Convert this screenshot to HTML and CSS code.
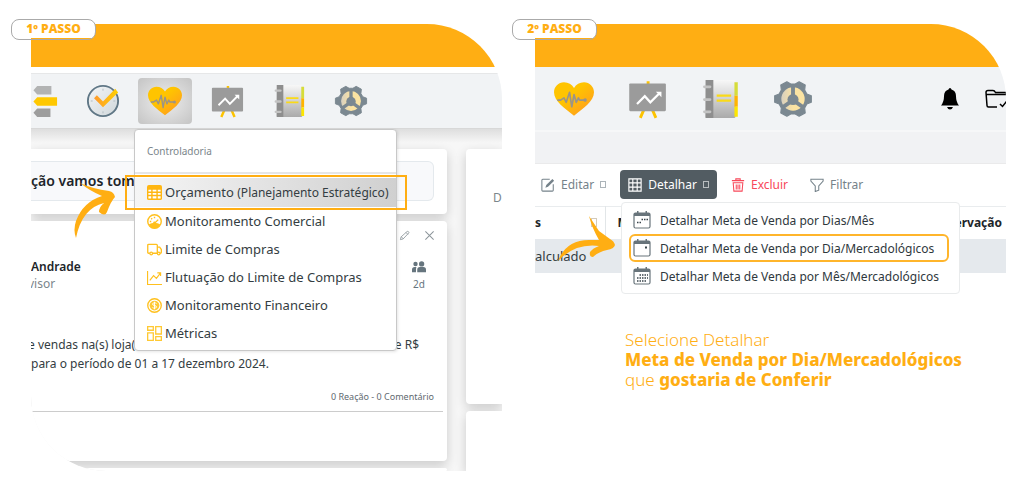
FILE: index.html
```html
<!DOCTYPE html>
<html lang="pt-BR">
<head>
  <meta charset="UTF-8">
  <meta name="viewport" content="width=device-width, initial-scale=1.0">
  <title>Detalhar Meta de Venda</title>
  <link rel="stylesheet" href="styles.css">
</head>
<body>
  <svg class="sprite" width="0" height="0" aria-hidden="true">
    <defs>
      <linearGradient id="g-heart" x1="0" y1="0" x2="1" y2="1"><stop offset=".4" stop-color="#ffc400"/><stop offset="1" stop-color="#ff9425"/></linearGradient>
      <linearGradient id="g-check" x1="0" y1="0" x2="1" y2="0"><stop offset="0" stop-color="#ff9a2e"/><stop offset="1" stop-color="#ffd000"/></linearGradient>
      <linearGradient id="g-book" x1="0" y1="0" x2="0" y2="1"><stop offset="0" stop-color="#f7f7f7"/><stop offset="1" stop-color="#aaa"/></linearGradient>
      <linearGradient id="g-clock" x1="0" y1="0" x2="1" y2="1"><stop offset="0" stop-color="#f4f6f8"/><stop offset="1" stop-color="#cfd6da"/></linearGradient>
      <linearGradient id="g-gear" x1="0" y1="0" x2="1" y2="0"><stop offset="0" stop-color="#d8d0c0"/><stop offset=".5" stop-color="#fbe3a2"/></linearGradient>
    </defs>
    <symbol id="signs" viewBox="0 0 36 36">
      <path d="M14 2h15v9H14l-4-4.500z" fill="#b2b3b3"/><path d="M14 14h21v9H14l-4-4.500z" fill="#ffc800"/><path d="M14 26h14v9H14l-4-4.500z" fill="#9d9d9d"/>
    </symbol>
    <symbol id="clock" viewBox="0 0 36 36">
      <circle cx="18" cy="18" r="16" fill="url(#g-clock)" stroke="#607786" stroke-width="2"/>
      <path d="M18 5v2M18 29v2M5 18h2M29 18h2" stroke="#aeb8be"/>
      <path d="M8.500 15l3-3 6.500 6.500L31 5l3 4-16 15.500z" fill="url(#g-check)"/>
    </symbol>
    <symbol id="heart" viewBox="0 0 36 36">
      <path d="M18 33C10 27 0 20 0 12 0 7 4 3 9 3 13 3 16 5 18 8 20 5 23 3 27 3 32 3 36 7 36 12 36 20 26 27 18 33z" fill="url(#g-heart)"/>
      <path d="M3 19h3l3-2 2 4 3-9 2 13 2-11 2 7 2-4 1 2h5" fill="none" stroke="#9b9488" stroke-width="1.500" stroke-linejoin="round"/><circle cx="28" cy="19" r="1.600" fill="#9b9488"/>
    </symbol>
    <symbol id="easel" viewBox="0 0 36 36">
      <path d="M19 2v4M15 28l-3 7M23 28l3 7" stroke="#fdc300" stroke-width="2.600"/>
      <rect x="2" y="4" width="33" height="25" rx="1" fill="#9b9b9b"/>
      <path d="M9 22.500l7-7 5 5.500 8-8" fill="none" stroke="#fff" stroke-width="2"/><path d="M26 11.500h5v5z" fill="#fff"/>
    </symbol>
    <symbol id="book" viewBox="0 0 36 36">
      <rect x="5" y="1" width="27" height="34" rx="1" fill="url(#g-book)"/><path d="M5 1h7v34H5z" fill="#8e8e8e"/>
      <path d="M31 3h3v12h-3z" fill="#d6dc3a"/><path d="M31 15h3v10h-3z" fill="#ffb400"/><path d="M31 25h3v9h-3z" fill="#fde600"/>
      <path d="M15 15h13M15 19.500h13" stroke="#fada17" stroke-width="2"/>
      <path d="M4 7h5M4 18.500h5M4 29.500h5" stroke="#c3c3c3" stroke-width="2.500" stroke-linecap="round"/>
    </symbol>
    <symbol id="gear" viewBox="0 0 36 36">
      <path d="M12.500 2.500l3.500 2h4l3.500-2 5.500 3-.500 4.500 2 3.500 4 1.500v6l-4 1.500-2 3.500.500 4.500-5.500 3-3.500-2h-4l-3.500 2-5.500-3 .500-4.500-2-3.500-4-1.500v-6l4-1.500 2-3.500L7 5.500z" fill="#7b8891" stroke="#7b8891" stroke-linejoin="round"/>
      <circle cx="18" cy="18" r="10.500" fill="url(#g-gear)"/>
      <path d="M18 7v11M18 19l-10 7M18 19l10 7" stroke="#7b8891" stroke-width="3.500"/><circle cx="18" cy="18.500" r="5" fill="#7b8891"/>
    </symbol>
    <symbol id="table" viewBox="0 0 16 16">
      <rect x="0" y="0" width="16" height="16" rx="2" fill="#ffb612"/>
      <path d="M1.500 5h3v2h-3zM6 5h4v2H6zM11.500 5h3v2h-3zM1.500 8.500h3v2h-3zM6 8.500h4v2H6zM11.500 8.500h3v2h-3zM1.500 12h3v2.500h-3zM6 12h4v2.500H6zM11.500 12h3v2.500h-3z" fill="#fff"/>
    </symbol>
    <symbol id="gauge" viewBox="0 0 16 16">
      <circle cx="8" cy="8" r="7.200" fill="none" stroke="#ffc01e" stroke-width="1.500"/><path d="M2 11c3-2 9-2 12 0-1 3-3 4.500-6 4.500S3 14 2 11z" fill="#ffc01e"/>
      <path d="M8 10l4-4M8 3v1.500M3 8h1.500M4.500 4.500l1 1" stroke="#ffc01e" stroke-width="1.500"/><circle cx="8" cy="9.500" r="1.500" fill="#ffc01e"/>
    </symbol>
    <symbol id="truck" viewBox="0 0 16 16">
      <path d="M3 12H1.800Q.800 12 .800 11V3.500q0-1 1-1H10q1 0 1 1V12H6M11 5.500h2.500L15.300 8v3q0 1-1 1H14" fill="none" stroke="#ffc01e" stroke-width="1.400"/>
      <circle cx="4.500" cy="12.300" r="1.400" fill="none" stroke="#ffc01e" stroke-width="1.300"/><circle cx="12.500" cy="12.300" r="1.400" fill="none" stroke="#ffc01e" stroke-width="1.300"/>
    </symbol>
    <symbol id="graph" viewBox="0 0 16 16"><path d="M.600 1v14.400H16M3 11l4-5 3 3 4.500-6M11 3h3.500v3.500" fill="none" stroke="#ffc01e" stroke-width="1.200"/></symbol>
    <symbol id="coin" viewBox="0 0 16 16">
      <circle cx="8" cy="8" r="7.200" fill="none" stroke="#ffc01e" stroke-width="1.400"/><circle cx="8" cy="8" r="5.200" fill="#ffc933"/>
      <path d="M10 6Q9.500 5 8 5T6 6.300 8 8t2 1.700T8 11 6 10M8 4v8" fill="none" stroke="#fff" stroke-width="1"/>
    </symbol>
    <symbol id="grid" viewBox="0 0 16 16"><path d="M.700.700h6v3.800h-6zM9.300.700h6v7.800h-6zM.700 7.300h6v8h-6zM9.300 11.300h6v4h-6z" fill="none" stroke="#ffc933" stroke-width="1.400"/></symbol>
    <symbol id="pencil" viewBox="0 0 16 16"><path d="M2 14l1-4 9-8q2-.500 2.500 2l-8.500 9zM10 3.500l3 3M3.500 10l3 3" fill="none" stroke="currentColor" stroke-width="1.200"/></symbol>
    <symbol id="close" viewBox="0 0 16 16"><path d="M2 2l12 12M14 2L2 14" stroke="currentColor" stroke-width="1.500"/></symbol>
    <symbol id="people" viewBox="0 0 16 16"><circle cx="4" cy="4.500" r="2.500"/><circle cx="11" cy="4.500" r="3"/><path d="M0 14v-3q0-3 3-3h2q-.500 1-.500 6zM6 14v-3q0-3 3-3h4q3 0 3 3v3z"/></symbol>
    <symbol id="edit" viewBox="0 0 16 16"><path d="M10 1.500H2q-1 0-1 1V14q0 1 1 1h11q1 0 1-1V7" fill="none" stroke="currentColor" stroke-width="1.200"/><path d="M5 11l1-3 7-7 2 2-7 7z"/></symbol>
    <symbol id="cells" viewBox="0 0 16 16"><path d="M1 1h14v14H1zM1 5.500h14M1 10.500h14M5.500 1v14M10.500 1v14" fill="none" stroke="currentColor" stroke-width="1.300"/></symbol>
    <symbol id="trash" viewBox="0 0 16 16"><path d="M1 3h14M5.500 3V1h5v2M2.500 5.500h11l-.800 9.500H3.300zM6 7.500v5.500M8 7.500v5.500M10 7.500v5.500" fill="none" stroke="currentColor" stroke-width="1.200"/></symbol>
    <symbol id="funnel" viewBox="0 0 16 16"><path d="M1 1.500h14v2L10 9v5l-4 1.500V9L1 3.500z" fill="none" stroke="currentColor" stroke-width="1.200"/></symbol>
    <symbol id="bell" viewBox="0 0 20 22"><path d="M10 0q1.200 0 1.500 1.600Q16 3 16 8q0 6 3 9.500H1Q4 14 4 8q0-5 4.500-6.400Q8.800 0 10 0zM7 19h6q-1 2.500-3 2.500T7 19z"/></symbol>
    <symbol id="folder" viewBox="0 0 24 20"><path d="M12 18H3.500Q2 18 2 16.500L1 3.500Q1 1.500 3 1.500h5q1.500 0 2.500 2h9.500q2 0 2 2V10M1 5.500h20M15 15l2.500 2.500 4-5" fill="none" stroke="currentColor" stroke-width="1.500"/></symbol>
    <symbol id="cal" viewBox="0 0 18 18"><rect x="1" y="2" width="16" height="15" rx="1.500" fill="#fff" stroke="#68747b" stroke-width="1.200"/><path d="M1 2h16v3H1zM4 0h1.500v3H4zM12.500 0H14v3h-1.500z" fill="#68747b"/></symbol>
  </svg>

  <main class="steps">
    <section class="step">
      <h2 class="badge">1º PASSO</h2>
      <div class="screen screen-home">
        <div class="brand-bar"></div>
        <nav class="modules">
          <button class="module" aria-label="Cadastros"><svg><use href="#signs"/></svg></button>
          <button class="module" aria-label="Tarefas"><svg><use href="#clock"/></svg></button>
          <button class="module active" aria-label="Controladoria"><svg><use href="#heart"/></svg></button>
          <button class="module" aria-label="Painel"><svg><use href="#easel"/></svg></button>
          <button class="module" aria-label="Agenda"><svg><use href="#book"/></svg></button>
          <button class="module" aria-label="Configurações"><svg><use href="#gear"/></svg></button>
        </nav>

        <div class="feed">
          <div class="feed-main">
            <div class="card notice"><p>ção vamos tom</p></div>
            <article class="card post">
              <div class="post-tools">
                <button aria-label="Editar"><svg><use href="#pencil"/></svg></button>
                <button aria-label="Fechar"><svg><use href="#close"/></svg></button>
              </div>
              <header class="post-head">
                <div><strong>Andrade</strong><span class="role">visor</span></div>
                <div class="age"><svg><use href="#people"/></svg><span>2d</span></div>
              </header>
              <div class="post-text">
                <p class="cut"><span>e vendas na(s) loja(s)</span><span>e R$</span></p>
                <p>para o período de 01 a 17 dezembro 2024.</p>
              </div>
              <footer class="post-foot">0 Reação - 0 Comentário</footer>
            </article>
            <div class="card next"></div>
          </div>
          <div class="feed-side">
            <div class="card side-top">D</div>
            <div class="card side-bottom"></div>
          </div>
        </div>

        <div class="menu">
          <h3>Controladoria</h3>
          <a href="#" class="selected"><svg><use href="#table"/></svg><span>Orçamento <small>(Planejamento Estratégico)</small></span></a>
          <a href="#"><svg><use href="#gauge"/></svg>Monitoramento Comercial</a>
          <a href="#"><svg><use href="#truck"/></svg>Limite de Compras</a>
          <a href="#"><svg><use href="#graph"/></svg>Flutuação do Limite de Compras</a>
          <a href="#"><svg><use href="#coin"/></svg>Monitoramento Financeiro</a>
          <a href="#"><svg><use href="#grid"/></svg>Métricas</a>
        </div>
        <svg class="arrow arrow-one" viewBox="0 0 44 58"><path d="M7 1Q20 7 36 9q5 1 6 6-4 4-8 15-2 5-8 0 0-5 5-9Q9 26 3 56 0 48 3 39 10 20 29 14 17 9 7 1z" fill="#ffae13"/></svg>
      </div>
    </section>

    <section class="step">
      <h2 class="badge">2º PASSO</h2>
      <div class="screen">
        <div class="brand-bar"></div>
        <nav class="modules modules-large">
          <button class="module" aria-label="Controladoria"><svg><use href="#heart"/></svg></button>
          <button class="module" aria-label="Painel"><svg><use href="#easel"/></svg></button>
          <button class="module" aria-label="Agenda"><svg><use href="#book"/></svg></button>
          <button class="module" aria-label="Configurações"><svg><use href="#gear"/></svg></button>
          <div class="status">
            <button aria-label="Notificações"><svg class="bell"><use href="#bell"/></svg></button>
            <button aria-label="Arquivos"><svg class="folder"><use href="#folder"/></svg></button>
          </div>
        </nav>
        <div class="subbar"></div>
        <div class="actions">
          <button class="action"><svg><use href="#edit"/></svg>Editar<i class="box"></i></button>
          <button class="action open"><svg><use href="#cells"/></svg>Detalhar<i class="box"></i></button>
          <button class="action danger"><svg><use href="#trash"/></svg>Excluir</button>
          <button class="action"><svg><use href="#funnel"/></svg>Filtrar</button>
        </div>
        <table class="goals">
          <thead>
            <tr><th class="first"><div>s<i class="box"></i></div></th><th>M</th><th class="last">Observação</th></tr>
          </thead>
          <tbody>
            <tr><td class="first">alculado</td><td></td><td></td></tr>
          </tbody>
        </table>

        <div class="options">
          <a href="#"><svg viewBox="0 0 18 18"><use href="#cal"/><path d="M4 11.500h1.500M6.500 11.500H8M8.500 8.500H10M11 8.500h1.500M13.500 8.500H15" stroke="#39444b" stroke-width="1.500"/></svg>Detalhar Meta de Venda por Dias/Mês</a>
          <a href="#" class="chosen"><svg viewBox="0 0 18 18"><use href="#cal"/><path d="M12 8.500h2" stroke="#39444b" stroke-width="2"/></svg>Detalhar Meta de Venda por Dia/Mercadológicos</a>
          <a href="#"><svg viewBox="0 0 18 18"><use href="#cal"/><path d="M6.500 8H15M4 11h11M4 14h9" stroke="#39444b" stroke-width="1.500" stroke-dasharray="1.500 1"/></svg>Detalhar Meta de Venda por Mês/Mercadológicos</a>
        </div>
        <svg class="arrow arrow-two" viewBox="0 0 58 50"><path d="M32 5l10 15 11 8q4 2 5 6-1 4-8 5-9 2-14 7-4 0-3-5 3-4 9-6Q18 32 1 50 9 29 32 29l10 0Q35 17 32 5z" fill="#ffae13"/></svg>
        <p class="caption">Selecione Detalhar<br><strong>Meta de Venda por Dia/Mercadológicos</strong><br>que <strong>gostaria de Conferir</strong></p>
      </div>
    </section>
  </main>
</body>
</html>
```
FILE: styles.css
```css
*{
  box-sizing: border-box;
}
body{
  margin: 0;
  background-color: #fff;
  color: #343d42;
  font-family: "Noto Sans", "Open Sans", sans-serif;
  font-size: 12px;
}
h2,h3,p{
  margin: 0;
}
button{
  border: none;
  background: none;
  padding: 0;
  font: inherit;
  color: inherit;
}
a{
  color: inherit;
  text-decoration: none;
}
svg{
  display: block;
  flex: none;
  fill: currentColor;
}
.sprite{
  position: absolute;
}
.steps{
  display: grid;
  grid-template-columns: 1fr 1fr;
  gap: 33px;
  padding: 24px 18px 20px 31px;
}
.step{
  position: relative;
  min-width: 0;
}
/* step label hangs over the corner of the screen */
.badge{
  position: absolute;
  z-index: 3;
  left: -20px;
  top: -5px;
  width: 85px;
  height: 21px;
  border: 1px solid #aaa;
  border-radius: 8px;
  background: linear-gradient(#fff 18px, transparent 18px);
  color: #ffae13;
  font: 800 12px/17px "Open Sans", sans-serif;
  text-align: center;
}
.step:nth-child(2) .badge{
  left: -23px;
}
.screen{
  overflow: hidden;
  border-radius: 0 75px 0 0;
}
.screen-home{
  border-radius: 0 75px 0 75px;
}
.brand-bar{
  height: 43px;
  background-color: #ffae13;
}
.modules{
  display: flex;
  align-items: center;
  gap: 8px;
  height: 56px;
  margin-top: 6px;
  border-top: 1px solid #e6e7e8;
  border-bottom: 1px solid #d8d8d8;
  background-color: #f1f3f5;
}
.module{
  display: flex;
  flex: none;
  align-items: center;
  justify-content: center;
  width: 54px;
  height: 46px;
  border-radius: 4px;
}
.module svg{
  width: 34px;
  height: 34px;
}
.module:first-child{
  margin-left: -17px;
}
.module.active{
  background: radial-gradient(#eee, #c4c4c4);
}
.feed{
  display: flex;
  gap: 19px;
  padding-top: 20px;
  background: linear-gradient(#dedede, #f7f7f7 14px);
}
.feed-main{
  display: flex;
  flex: 1;
  flex-direction: column;
  gap: 7px;
  min-width: 0;
}
.feed-side{
  display: flex;
  flex-direction: column;
  gap: 7px;
  width: 36px;
}
.card{
  border-radius: 0 4px 4px 0;
  background-color: #fff;
  box-shadow: 0 4px 12px rgba(0,0,0,.18);
}
.notice{
  padding: 12px 13px 13px 0;
}
.notice p{
  border: 1px solid #e4e9ed;
  border-left: none;
  border-radius: 0 6px 6px 0;
  background-color: #f8f9fb;
  color: #212529;
  font-size: 14px;
  font-weight: 600;
  line-height: 38px;
}
.post{
  height: 240px;
  padding: 9px 4px 0 0;
}
.post-tools{
  display: flex;
  justify-content: flex-end;
  gap: 14px;
  padding-right: 8px;
  color: #8c959a;
}
.post-tools svg{
  width: 11px;
  height: 11px;
}
.post-head{
  display: flex;
  justify-content: space-between;
  height: 51px;
  padding: 17px 17px 0 0;
  line-height: 17px;
}
.post-head strong{
  display: block;
  color: #212529;
  font-weight: 600;
}
.role{
  margin-left: -3px;
  color: #7b868c;
}
.age{
  display: flex;
  flex-direction: column;
  gap: 2px;
  align-items: center;
  padding-top: 2px;
  color: #66757e;
  font-size: 10px;
}
.age svg{
  width: 14px;
  height: 14px;
}
.post-text{
  padding: 43px 24px 0 0;
  line-height: 19px;
}
.cut{
  display: flex;
  justify-content: space-between;
  margin-left: -3px;
}
.post-foot{
  padding: 14px 9px 5px 0;
  border-bottom: 1px solid #ccc;
  color: #5f6a70;
  font-size: 9px;
  line-height: 19px;
  text-align: right;
}
.next{
  height: 3px;
}
.side-top{
  height: 255px;
  padding: 40px 0 0 27px;
  border-radius: 4px 0 0 4px;
  color: #7b868c;
}
.side-bottom{
  flex: 1;
  border-radius: 4px 0 0 0;
}
/* open menu, drawn over the feed */
.menu{
  position: absolute;
  z-index: 1;
  left: 103px;
  top: 105px;
  width: 263px;
  padding-bottom: 3px;
  border: 1px solid #c8c8c8;
  border-radius: 4px;
  background-color: #fff;
  box-shadow: 1px 1px 3px rgba(0,0,0,.1);
}
.menu h3{
  margin-bottom: 4px;
  padding-left: 12px;
  border-bottom: 2px solid #e6e6e6;
  color: #7b868c;
  font-size: 10px;
  font-weight: 400;
  line-height: 42px;
}
.menu a{
  display: flex;
  align-items: center;
  gap: 3px;
  position: relative;
  padding-left: 12px;
  font-size: 13px;
  line-height: 28px;
  white-space: nowrap;
}
.menu a svg{
  width: 15px;
  height: 15px;
}
.menu small{
  font-size: 12px;
}
.menu .selected{
  background: linear-gradient(90deg, #f5f5f5, #d0d0d0);
}
.menu .selected::after{
  content: "";
  position: absolute;
  inset: -3px -11px -3px -10px;
  border: 2px solid #ffae13;
}
.arrow{
  position: absolute;
  z-index: 2;
}
.arrow-one{
  left: 42px;
  top: 158px;
  width: 44px;
  height: 58px;
}
.arrow-two{
  left: 22px;
  top: 187px;
  width: 58px;
  height: 50px;
}
.modules-large{
  gap: 19px;
  height: 63px;
  margin-top: 0;
  border-top: none;
  border-bottom: none;
}
.modules-large .module svg{
  width: 40px;
  height: 40px;
}
.modules-large .module:first-child{
  margin-left: 12px;
}
.status{
  display: flex;
  align-items: center;
  gap: 25px;
  margin-left: auto;
  margin-right: -3px;
  color: #000;
}
.bell{
  width: 20px;
  height: 22px;
}
.folder{
  width: 24px;
  height: 20px;
}
.subbar{
  height: 34px;
  border-top: 2px solid #f6f7f8;
  border-bottom: 1px solid #eaeaeb;
  background-color: #f1f2f4;
}
.actions{
  display: flex;
  gap: 6px;
  padding: 6px 0 7px;
}
.action{
  display: flex;
  align-items: center;
  gap: 6px;
  height: 29px;
  padding: 0 8px;
  border-radius: 4px;
  color: #75828a;
}
.action:first-child{
  padding-left: 6px;
}
.action svg{
  width: 14px;
  height: 14px;
}
.action.open{
  background-color: #525c62;
  color: #fff;
}
.action.danger{
  color: #f8485a;
}
.box{
  width: 6px;
  height: 7px;
  border: 1px solid currentColor;
  opacity: .6;
}
.goals{
  width: 100%;
  border-top: 1px solid #e9ecee;
  border-collapse: collapse;
}
.goals th{
  height: 32px;
  padding: 0 12px;
  color: #212529;
  font-size: 12px;
  font-weight: 700;
  text-align: left;
}
.goals td{
  height: 34px;
  padding: 0;
  background-color: #e5e9ed;
  font-size: 13px;
}
.goals .first{
  width: 70px;
  padding-left: 0;
}
.goals th.first{
  border-right: 1px solid #e2e6e8;
  padding-right: 8px;
}
.goals th.first div{
  display: flex;
  align-items: center;
  justify-content: space-between;
}
.goals .box{
  height: 9px;
  color: #b5a68c;
}
.goals th.last{
  padding-right: 4px;
  text-align: right;
}
.options{
  position: absolute;
  z-index: 1;
  left: 86px;
  top: 178px;
  width: 339px;
  padding: 3px 7px;
  border: 1px solid #e9ebec;
  border-radius: 4px;
  background-color: #fff;
}
.options a{
  display: flex;
  align-items: center;
  gap: 9px;
  width: 320px;
  height: 28px;
  padding-left: 2px;
  border: 2px solid transparent;
  border-radius: 6px;
  color: #2f383d;
  white-space: nowrap;
}
.options svg{
  width: 18px;
  height: 18px;
}
.options .chosen{
  border-color: #ffb52b;
}
.caption{
  padding: 57px 0 0 90px;
  color: #ffae13;
  font-size: 17px;
  font-weight: 300;
  line-height: 20px;
}
.caption strong{
  font-weight: 800;
}
```
